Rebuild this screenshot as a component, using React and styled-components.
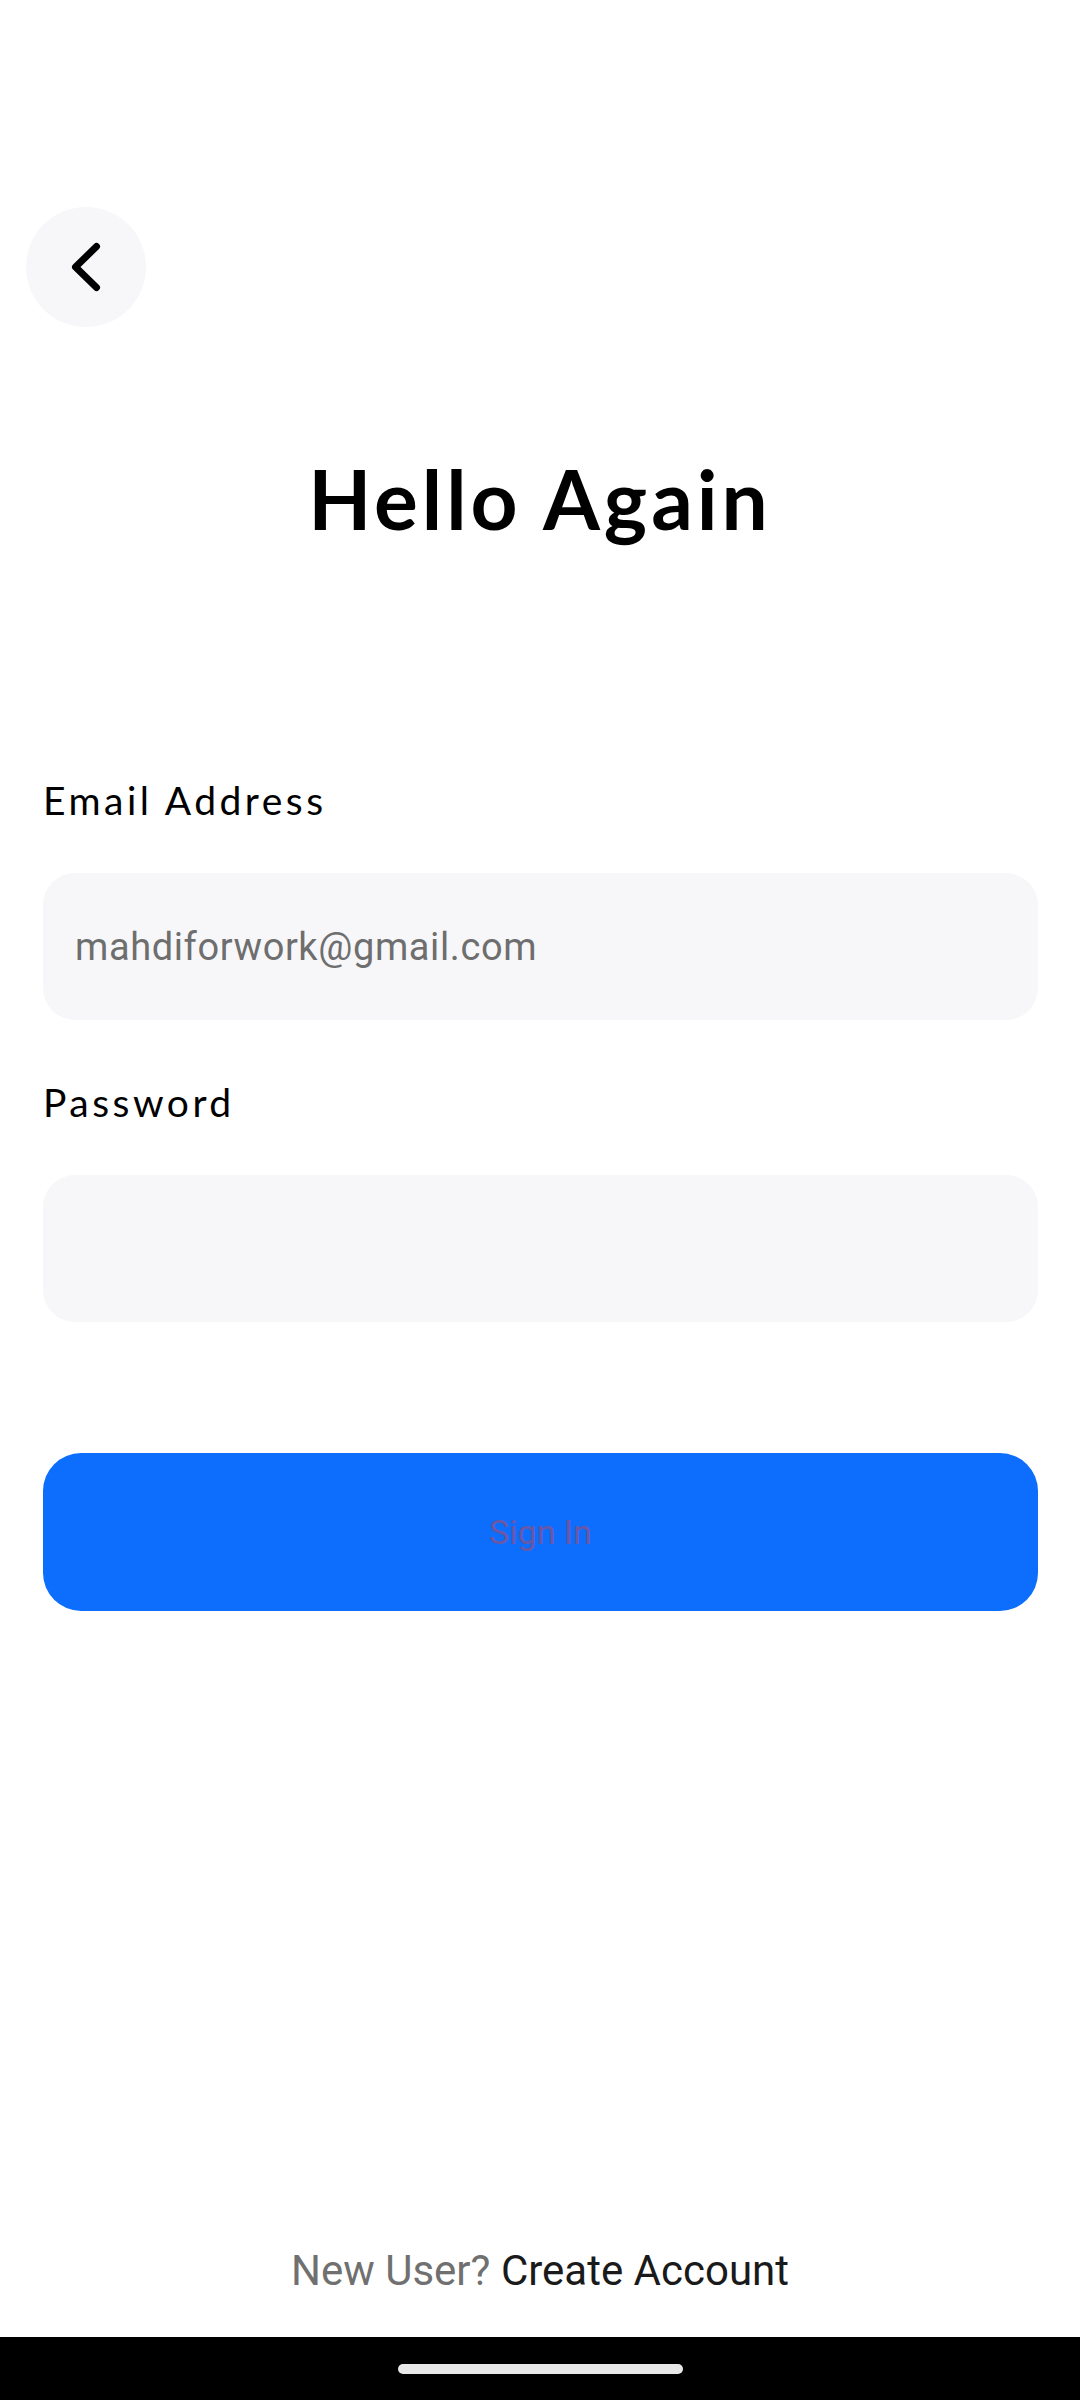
import React from 'react';
import styled, { createGlobalStyle } from 'styled-components';

const GlobalStyle = createGlobalStyle`
  html, body {
    margin: 0;
    padding: 0;
    background: #ffffff;
  }
  * {
    box-sizing: border-box;
  }
`;

function App() {
  return (
    <>
      <GlobalStyle />
      <Screen>
        <TopBar>
          <BackButton aria-label="back">
            <svg width="120" height="120" viewBox="0 0 120 120" fill="none">
              <path
                d="M70.5 39.5 L49.5 60 L70.5 80.5"
                stroke="#000"
                strokeWidth="7"
                strokeLinecap="round"
                strokeLinejoin="round"
              />
            </svg>
          </BackButton>
        </TopBar>

        <Title>Hello Again</Title>

        <Form>
          <Label>Email Address</Label>
          <Field>
            <FieldText>mahdiforwork@gmail.com</FieldText>
          </Field>

          <Label $top={62}>Password</Label>
          <Field />

          <SignInButton>Sign In</SignInButton>
        </Form>

        <Footer>
          <Muted>New User?</Muted> <Strong>Create Account</Strong>
        </Footer>

        <NavBar>
          <HomeIndicator />
        </NavBar>
      </Screen>
    </>
  );
}

const Screen = styled.div`
  display: flex;
  flex-direction: column;
  width: 1080px;
  min-height: 2400px;
  background: #ffffff;
`;

const TopBar = styled.div`
  display: flex;
  padding: 207px 0 0 26px;
`;

const BackButton = styled.button`
  display: flex;
  align-items: center;
  justify-content: center;
  width: 120px;
  height: 120px;
  padding: 0;
  border: none;
  border-radius: 50%;
  background: #f7f7f9;
`;

const Title = styled.h1`
  margin: 130px 0 0;
  text-align: center;
  font-family: 'Lato', 'Liberation Sans', sans-serif;
  font-weight: 700;
  font-size: 82px;
  line-height: 82px;
  letter-spacing: 4px;
  color: #000000;
`;

const Form = styled.div`
  display: flex;
  flex-direction: column;
  padding: 0 42px 0 43px;
  margin-top: 241px;
`;

const Label = styled.label`
  margin-top: ${p => (p.$top ? p.$top : 0)}px;
  font-family: 'Lato', 'Liberation Sans', sans-serif;
  font-weight: 400;
  font-size: 39px;
  line-height: 40px;
  letter-spacing: 3.5px;
  color: #000000;
`;

const Field = styled.div`
  display: flex;
  align-items: center;
  height: 147px;
  margin-top: 53px;
  padding: 0 32px;
  border-radius: 32px;
  background: #f7f7f9;
`;

const FieldText = styled.span`
  font-family: 'Roboto', 'Liberation Sans', sans-serif;
  font-size: 38px;
  letter-spacing: 0.6px;
  color: #6e6e6e;
`;

const SignInButton = styled.button`
  height: 158px;
  margin-top: 131px;
  border: none;
  border-radius: 38px;
  background: #0d6efd;
  font-family: 'Roboto', 'Liberation Sans', sans-serif;
  font-size: 34px;
  color: #6b57a5;
`;

const Footer = styled.div`
  margin-top: auto;
  padding-bottom: 41px;
  text-align: center;
  font-family: 'Roboto', 'Liberation Sans', sans-serif;
  font-size: 42px;
  line-height: 50px;
`;

const Muted = styled.span`
  color: #707070;
`;

const Strong = styled.span`
  color: #1a1a1a;
`;

const NavBar = styled.div`
  display: flex;
  justify-content: center;
  height: 63px;
  padding-top: 27px;
  background: #000000;
`;

const HomeIndicator = styled.div`
  width: 285px;
  height: 10px;
  border-radius: 5px;
  background: #e8e8e8;
`;

export default App;
